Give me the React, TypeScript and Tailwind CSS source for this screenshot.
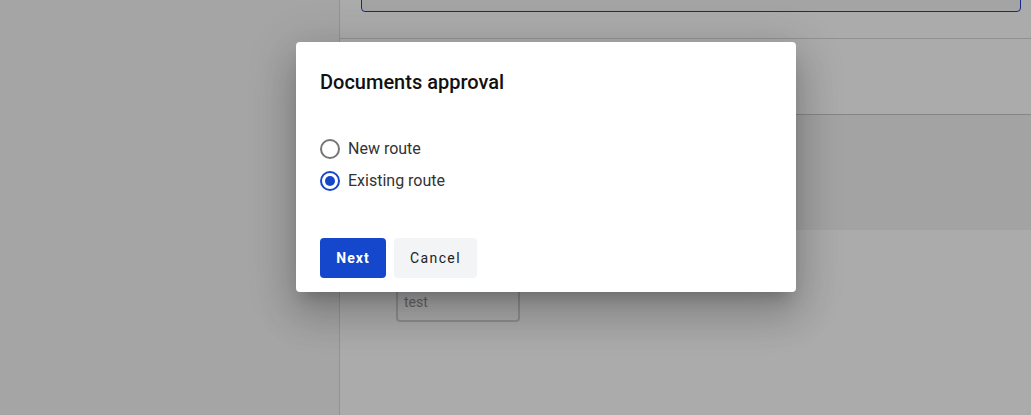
import { useState } from 'react';

const font = { fontFamily: 'Roboto, "Noto Sans", Arial, sans-serif' };

const Radio = ({ checked, label, onClick }: { checked: boolean; label: string; onClick: () => void }) => (
  <label onClick={onClick} className="flex items-center gap-2 h-8 cursor-pointer">
    <span
      className={`w-5 h-5 rounded-full border-2 flex items-center justify-center ${
        checked ? 'border-[#1447cc]' : 'border-[#767676]'
      }`}
    >
      {checked && <span className="w-[10px] h-[10px] rounded-full bg-[#1447cc]" />}
    </span>
    <span className="text-base text-[#333333]">{label}</span>
  </label>
);

const App = () => {
  const [route, setRoute] = useState<'new' | 'existing'>('existing');

  return (
    <div className="relative w-[1031px] h-[415px] overflow-hidden bg-white" style={font}>
      {/* Page underneath */}
      <div className="flex h-full">
        <div className="w-[340px] shrink-0 bg-[#f7f7f7] border-r border-[#dcdcdc]" />
        <div className="flex-1 flex flex-col">
          <div className="h-[39px] border-b border-[#d9d9d9] pl-[21px] pr-[10px]">
            <div className="h-[40px] -mt-[28px] rounded border border-[#1d40c8] bg-[#f5f5f5]" />
          </div>
          <div className="h-[76px] border-b border-[#c8c8c8]" />
          <div className="h-[115px] bg-[#f4f4f4]" />
          <div className="flex-1 pl-[56px] pt-[52px]">
            <div className="w-[124px] h-[40px] rounded border-2 border-[#d6d6d6] px-[6px] flex items-center text-sm text-[#9a9a9a]">
              test
            </div>
          </div>
        </div>
      </div>

      {/* Overlay */}
      <div className="absolute inset-0 bg-black/[0.33]" />

      {/* Dialog */}
      <div className="absolute left-[296px] top-[42px] w-[500px] h-[250px] bg-white rounded px-6 pt-6 shadow-[0_11px_15px_-7px_rgba(0,0,0,0.2),0_24px_38px_3px_rgba(0,0,0,0.14),0_9px_46px_8px_rgba(0,0,0,0.12)]">
        <h2 className="text-[20px] leading-8 font-medium text-[#111111]">Documents approval</h2>
        <div className="mt-[35px] flex flex-col">
          <Radio checked={route === 'new'} label="New route" onClick={() => setRoute('new')} />
          <Radio checked={route === 'existing'} label="Existing route" onClick={() => setRoute('existing')} />
        </div>
        <div className="mt-[41px] flex gap-2">
          <button className="h-10 w-[66px] rounded bg-[#1447cc] text-white text-sm font-bold tracking-[1px]">
            Next
          </button>
          <button className="h-10 w-[83px] rounded bg-[#f3f4f6] text-[#222222] text-sm font-normal tracking-[1.4px]">
            Cancel
          </button>
        </div>
      </div>
    </div>
  );
};

export default App;
